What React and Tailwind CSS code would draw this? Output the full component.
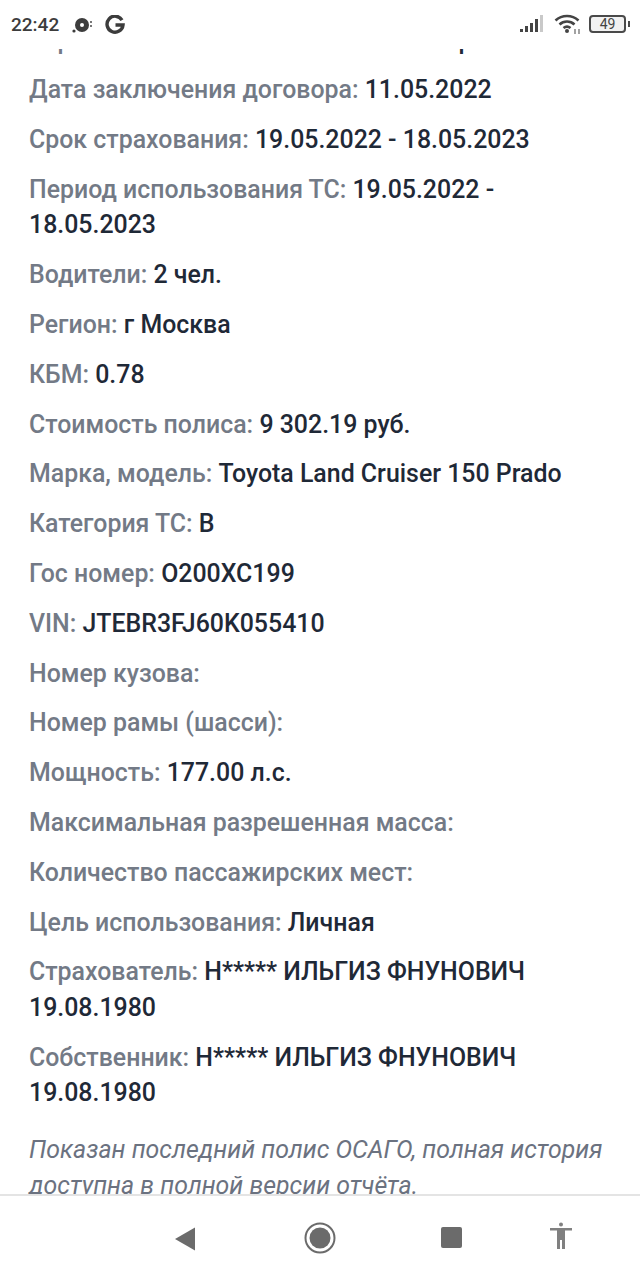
const rows = [
  ['Страховая компания:', 'ПАО "Росгосстрах"'],
  ['Дата заключения договора:', '11.05.2022'],
  ['Срок страхования:', '19.05.2022 - 18.05.2023'],
  ['Период использования ТС:', '19.05.2022 - 18.05.2023'],
  ['Водители:', '2 чел.'],
  ['Регион:', 'г Москва'],
  ['КБМ:', '0.78'],
  ['Стоимость полиса:', '9 302.19 руб.'],
  ['Марка, модель:', 'Toyota Land Cruiser 150 Prado'],
  ['Категория ТС:', 'B'],
  ['Гос номер:', 'О200ХС199'],
  ['VIN:', 'JTEBR3FJ60K055410'],
  ['Номер кузова:', ''],
  ['Номер рамы (шасси):', ''],
  ['Мощность:', '177.00 л.с.'],
  ['Максимальная разрешенная масса:', ''],
  ['Количество пассажирских мест:', ''],
  ['Цель использования:', 'Личная'],
  ['Страхователь:', 'Н***** ИЛЬГИЗ ФНУНОВИЧ 19.08.1980'],
  ['Собственник:', 'Н***** ИЛЬГИЗ ФНУНОВИЧ 19.08.1980'],
];

function StatusBar() {
  return (
    <div className="relative z-10 h-[49px] shrink-0 bg-white flex items-start justify-between pl-[11px] pr-[10px] pt-[13px]">
      <div className="flex items-center">
        <span className="text-[19px] leading-[24px] font-medium text-[#3c3c3c]">22:42</span>
        <svg width="22" height="16" viewBox="0 0 22 16" className="ml-[12px]">
          <circle cx="11" cy="8" r="7" fill="#3c3c3c" />
          <circle cx="11" cy="8" r="2" fill="#fff" />
          <circle cx="3" cy="14" r="1.6" fill="#3c3c3c" />
          <rect x="19" y="4" width="2" height="2" fill="#777" />
          <rect x="19" y="8" width="2" height="2" fill="#777" />
        </svg>
        <svg width="20" height="20" viewBox="0 0 20 20" className="ml-[12px]">
          <path d="M17 5.2A8 8 0 1 0 18 10H10.5" fill="none" stroke="#3c3c3c" strokeWidth="3.4" />
        </svg>
      </div>
      <div className="flex items-center mt-[1px]">
        <svg width="25" height="18" viewBox="0 0 25 18">
          <rect x="0" y="14" width="3" height="3" fill="#444" />
          <rect x="5" y="11" width="3" height="6" fill="#444" />
          <rect x="10" y="8" width="3" height="9" fill="#444" />
          <rect x="15" y="4" width="3" height="13" fill="#444" />
          <rect x="20" y="0" width="3" height="17" fill="#c9c9c9" />
        </svg>
        <svg width="28" height="20" viewBox="0 0 28 20" className="ml-[9px]">
          <path d="M1.5 6.5a17 17 0 0 1 23 0" fill="none" stroke="#444" strokeWidth="2.6" />
          <path d="M5.5 10.5a11 11 0 0 1 15 0" fill="none" stroke="#444" strokeWidth="2.6" />
          <path d="M9.5 14a5.5 5.5 0 0 1 7 0" fill="none" stroke="#444" strokeWidth="2.6" />
          <circle cx="13" cy="17" r="2" fill="#444" />
          <path d="M21 20v-5M25 15v5" stroke="#666" strokeWidth="1.2" />
        </svg>
        <div className="ml-[7px] w-[37px] h-[18px] border-[2.5px] border-[#4a4a4a] rounded-[4px] bg-[#f2f2f2] flex items-center justify-center text-[14px] leading-none text-[#444]">
          49
        </div>
        <div className="ml-[2px] w-[2px] h-[6px] bg-[#4a4a4a]" />
      </div>
    </div>
  );
}

function NavBar() {
  return (
    <div className="h-[86px] shrink-0 relative z-10 bg-white border-t-2 border-[#e4e4e4] flex items-start pt-[26px] pl-[174px]">
      <svg width="22" height="26" viewBox="0 0 22 26" className="mt-[4px]">
        <path d="M21 1.5v23L1 13z" fill="#6b6b6b" />
      </svg>
      <svg width="32" height="32" viewBox="0 0 32 32" className="ml-[108px]">
        <circle cx="16" cy="16" r="14.5" fill="none" stroke="#6b6b6b" strokeWidth="2" />
        <circle cx="16" cy="16" r="10.5" fill="#6b6b6b" />
      </svg>
      <div className="ml-[105px] mt-[5px] w-[21px] h-[21px] rounded-[2px] bg-[#6b6b6b]" />
      <svg width="24" height="28" viewBox="0 0 24 28" className="ml-[87px]">
        <circle cx="12" cy="2.5" r="2" fill="#808080" />
        <path d="M1 6h22v2.5h-7V27h-3v-9h-2v9H8V8.5H1z" fill="#808080" />
      </svg>
    </div>
  );
}

export default function App() {
  return (
    <div className="w-[640px] h-[1280px] overflow-hidden bg-white flex flex-col font-['Roboto',sans-serif]">
      <StatusBar />
      <main className="flex-1 min-h-0 overflow-hidden pl-[29px] pr-[30px] -mt-[26.5px] text-[24.9px] leading-[35.5px] font-medium text-[#1f2937]">
        <div className="flex flex-col gap-[14.3px]">
          {rows.map(([k, v]) => (
            <p key={k}>
              <span className="text-[#737a86]">{k}</span> {v}
            </p>
          ))}
          <p className="italic font-normal text-[#6b7280] mt-[7.5px]">
            Показан последний полис ОСАГО, полная история доступна в полной версии отчёта.
          </p>
        </div>
      </main>
      <NavBar />
    </div>
  );
}
